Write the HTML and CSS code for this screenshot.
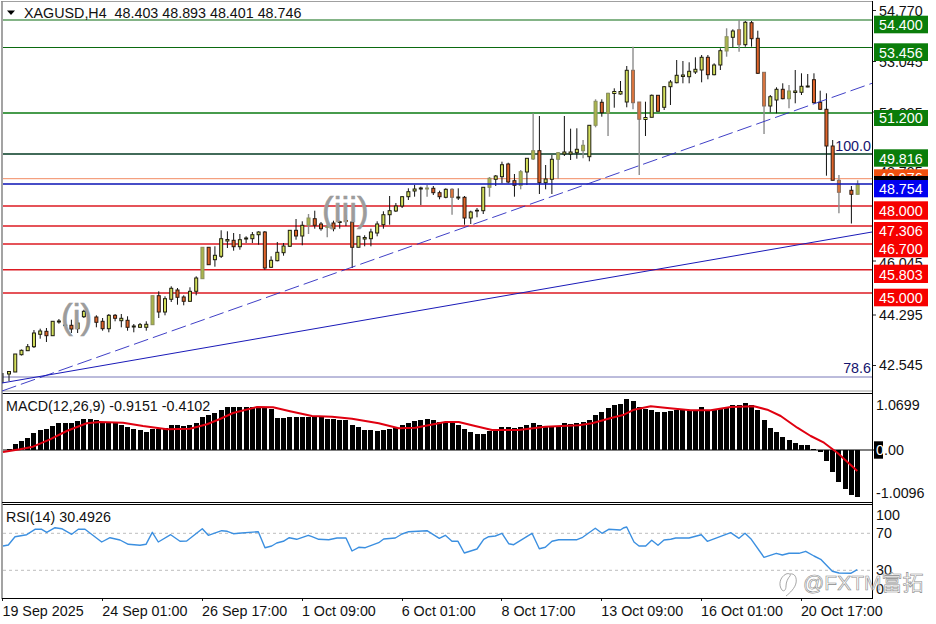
FILE: index.html
```html
<!DOCTYPE html>
<html lang="en">
<head>
<meta charset="utf-8">
<title>XAGUSD,H4</title>
<link rel="stylesheet" href="styles.css">
</head>
<body>
<main class="terminal">
  <svg class="pane" width="936" height="392" viewBox="0 0 936 392">
    <line class="frame-gray" x1="1" y1="1.5" x2="873" y2="1.5"/>
    <line class="frame-gray thick" x1="2" y1="1" x2="2" y2="392"/>
    <line class="frame-gray" x1="2" y1="391" x2="873" y2="391"/>
    <line class="frame" x1="872.5" y1="1" x2="872.5" y2="392"/>

    <line class="lv green" x1="3" y1="20" x2="872" y2="20"/>
    <line class="lv green" x1="3" y1="47.5" x2="872" y2="47.5"/>
    <line class="lv green heavy" x1="3" y1="113" x2="872" y2="113"/>
    <line class="lv dark" x1="3" y1="154" x2="872" y2="154"/>
    <line class="lv coral" x1="3" y1="178.7" x2="872" y2="178.7"/>
    <line class="lv red heavy" x1="3" y1="206" x2="872" y2="206"/>
    <line class="lv red" x1="3" y1="226" x2="872" y2="226"/>
    <line class="lv red" x1="3" y1="244" x2="872" y2="244"/>
    <line class="lv red" x1="3" y1="269.7" x2="872" y2="269.7"/>
    <line class="lv red" x1="3" y1="293" x2="872" y2="293"/>
    <line class="lv fib" x1="3" y1="377" x2="872" y2="377"/>

    <g id="candles"></g>

    <line class="lv blue heavy" x1="3" y1="184" x2="872" y2="184"/>
    <line class="trend dashed" x1="2" y1="391" x2="872" y2="83.3"/>
    <line class="trend" x1="2" y1="383" x2="872" y2="232"/>

    <text class="wave" x="61" y="329">(i)</text>
    <text class="wave" x="322" y="222">(iii)</text>

    <path class="marker" d="M7 10.5h8l-4 4.5z"/>
    <text class="t" x="24" y="18">XAGUSD,H4&#160; 48.403 48.893 48.401 48.746</text>
    <text class="t fibt" x="871" y="151" text-anchor="end">100.0</text>
    <text class="t fibt" x="871" y="373" text-anchor="end">78.6</text>

    <path class="tick" d="M873 10.5h3M873 61.5h3M873 112h3M873 261h3M873 315h3M873 365.5h3"/>
    <text class="t" x="879" y="15.500">54.770</text>
    <text class="t" x="879" y="66.500">53.045</text>
    <text class="t" x="879" y="118">51.295</text>
    <text class="t" x="879" y="176.500">48.795</text>
    <text class="t" x="879" y="268">46.045</text>
    <text class="t" x="879" y="319.700">44.295</text>
    <text class="t" x="879" y="370.300">42.545</text>

    <rect class="tag g" x="874" y="15.700" width="54" height="17.600"/>
    <text class="t w" x="879" y="30">54.400</text>
    <rect class="tag g" x="874" y="43.300" width="54" height="17.700"/>
    <text class="t w" x="879" y="57.700">53.456</text>
    <rect class="tag g" x="874" y="110" width="54" height="16"/>
    <text class="t w" x="879" y="122.700">51.200</text>
    <rect class="tag g" x="874" y="149.300" width="54" height="17.400"/>
    <text class="t w" x="879" y="164">49.816</text>
    <rect class="tag o" x="874" y="169.300" width="54" height="8"/>
    <text class="t w" x="879" y="183">48.976</text>
    <rect class="tag k" x="874" y="176" width="54" height="5"/>
    <rect class="tag b" x="874" y="180" width="54" height="17.300"/>
    <text class="t w" x="879" y="194">48.754</text>
    <rect class="tag r" x="874" y="201.300" width="54" height="18.400"/>
    <text class="t w" x="879" y="215.700">48.000</text>
    <rect class="tag r" x="874" y="222" width="54" height="35.300"/>
    <text class="t w" x="879" y="235.700">47.306</text>
    <text class="t w" x="879" y="254">46.700</text>
    <rect class="tag r" x="874" y="264.700" width="54" height="18.300"/>
    <text class="t w" x="879" y="279.700">45.803</text>
    <rect class="tag r" x="874" y="288.700" width="54" height="17.600"/>
    <text class="t w" x="879" y="303">45.000</text>
  </svg>

  <svg class="pane" width="936" height="111" viewBox="0 392 936 111">
    <line class="frame" x1="2" y1="393.500" x2="873" y2="393.500"/>
    <line class="frame-gray thick" x1="2" y1="392" x2="2" y2="503"/>
    <line class="frame" x1="872.5" y1="392" x2="872.5" y2="503"/>
    <line class="frame" x1="2" y1="502.500" x2="873" y2="502.500"/>
    <g id="histogram"></g>
    <line class="frame" x1="3" y1="450" x2="874" y2="450"/>
    <polyline id="signal" class="signal"/>
    <text class="t" x="6" y="411">MACD(12,26,9) -0.9151 -0.4102</text>
    <text class="t" x="876" y="409.700">1.0699</text>
    <rect class="tag k" x="874" y="441.300" width="9" height="17.400"/>
    <text class="t" x="876" y="455"><tspan class="zero">0</tspan>.00</text>
    <text class="t" x="876" y="498.300">-1.0096</text>
  </svg>

  <svg class="pane" width="936" height="99" viewBox="0 503 936 99">
    <line class="frame" x1="2" y1="504.500" x2="873" y2="504.500"/>
    <line class="frame-gray thick" x1="2" y1="503" x2="2" y2="599"/>
    <line class="frame" x1="872.5" y1="503" x2="872.5" y2="599"/>
    <line class="frame" x1="2" y1="598.500" x2="873" y2="598.500"/>
    <line class="level" x1="3" y1="533.300" x2="872" y2="533.300"/>
    <line class="level" x1="3" y1="570.300" x2="872" y2="570.300"/>
    <polyline id="rsi" class="rsi"/>
    <path class="tick" d="M2.500 599v2M102.500 599v2M202.500 599v2M302.500 599v2M402.500 599v2M501.500 599v2M601.500 599v2M701.500 599v2M801.500 599v2"/>
    <text class="t" x="6" y="521.700">RSI(14) 30.4926</text>
    <text class="t" x="876" y="520">100</text>
    <text class="t" x="876" y="538.300">70</text>
    <text class="t" x="876" y="575.300">30</text>
    <text class="t" x="876" y="594.300">0</text>
    <path class="mark" d="M786 574C780 577 778 585 782 590C784 592 786 590 786 586C786 582 788 578 790 576C791 574 789 573 786 574ZM790 574C795 573 797 578 796 583C795 588 790 593 786 596"/>
    <text class="watermark" x="803" y="590">@FXTM富拓</text>
  </svg>

  <div class="timeaxis">
    <span>19 Sep 2025</span>
    <span>24 Sep 01:00</span>
    <span>26 Sep 17:00</span>
    <span>1 Oct 09:00</span>
    <span>6 Oct 01:00</span>
    <span>8 Oct 17:00</span>
    <span>13 Oct 09:00</span>
    <span>16 Oct 01:00</span>
    <span>20 Oct 17:00</span>
  </div>
</main>
<script src="script.js"></script>
</body>
</html>
```
FILE: styles.css
```css
* { box-sizing: border-box; }
html, body { margin: 0; padding: 0; background: #fff; }
body { width: 936px; height: 624px; overflow: hidden; font-family: "Liberation Sans", Arial, sans-serif; }
.terminal { display: flex; flex-direction: column; width: 936px; height: 624px; }
.pane { display: block; flex: none; }

.frame { stroke: #000; stroke-width: 1; }
.frame-gray { stroke: #a0a0a0; stroke-width: 1; }
.frame-gray.thick { stroke: #8c8c8c; stroke-width: 1.6; }
.tick { fill: none; stroke: #222; stroke-width: 1; }

.lv { stroke-width: 1; }
.lv.heavy { stroke-width: 1.6; }
.lv.green { stroke: #0b6a10; stroke-width: 1.2; }
.lv.green.heavy { stroke: #0a7a10; stroke-width: 1.7; }
.lv.dark { stroke: #033a22; stroke-width: 1.3; }
.lv.coral { stroke: #f28a62; }
.lv.blue { stroke: #0a12b4; }
.lv.red { stroke: #dc1a22; stroke-width: 1.4; }
.lv.fib { stroke: #7878b8; }
.trend { stroke: #1a1ab8; stroke-width: 1; }
.trend.dashed { stroke: #2a2ac0; stroke-width: .9; stroke-dasharray: 15 5; }

.body-up { fill: #d4e05c; stroke: #1e1e10; stroke-width: 1; }
.body-down { fill: #e0642a; stroke: #2a1a10; stroke-width: 1; }
.body-up.soft { fill: #aab54a; stroke: #8a8f60; }
.body-down.soft { fill: #d8743e; stroke: #8a7060; }
.wick { stroke: #111; stroke-width: 1; }
.wick.soft { stroke: #8c8c8c; stroke-width: 1.4; }

.wave { font: 35px "Liberation Sans", Arial, sans-serif; fill: #9c9c9c; stroke: #9c9c9c; stroke-width: .6; }
.marker { fill: #000; }
.t { font: 14.3px "Liberation Sans", Arial, sans-serif; fill: #111; }
.t.w { fill: #fff; }
.t.fibt { fill: #14146e; }
.zero { fill: #fff; }
.tag.g { fill: #0a7d0a; }
.tag.o { fill: #f0500f; }
.tag.k { fill: #000; }
.tag.b { fill: #0000f0; }
.tag.r { fill: #f60000; }

.bar { fill: #000; shape-rendering: crispEdges; }
.signal { fill: none; stroke: #e00010; stroke-width: 2; stroke-linejoin: round; }
.level { stroke: #bdbdbd; stroke-width: 1; stroke-dasharray: 3 3; }
.rsi { fill: none; stroke: #3b8fe0; stroke-width: 1.4; stroke-linejoin: round; }

.watermark {
  font: 21px "Liberation Sans", "Noto Sans CJK SC", sans-serif;
  fill: rgba(255, 255, 255, .55);
  stroke: #8a8a8a;
  stroke-width: .6;
}
.mark { fill: rgba(255, 255, 255, .5); stroke: #8f8f8f; stroke-width: .8; }

.timeaxis {
  display: grid;
  grid-template-columns: repeat(9, 99.8px);
  padding: 1px 0 0 2.5px;
  font-size: 14.3px;
  line-height: 16px;
  color: #111;
}
.timeaxis span { white-space: nowrap; }
```
FILE: script.js
```js
var NS = 'http://www.w3.org/2000/svg';
var STEP = 6.24, X0 = 9;
function xOf(i) { return X0 + STEP * i; }
function add(parent, name, attrs) {
  var el = document.createElementNS(NS, name);
  for (var k in attrs) el.setAttribute(k, attrs[k]);
  parent.appendChild(el);
  return el;
}

// index, wick top, body top, body bottom, wick bottom, direction (1 up, 0 down), soft
var C = [
[0,371,371.5,374,381,1],[1,354,354,372,372,1],[2,349.5,350.3,354.7,355.5,1],[3,344,346.7,350.7,351,1],
[4,330,333,346.7,348,1],[5,328.7,331,334.3,338.7,1],[6,328,331.3,335.7,342,0],[7,321.3,321.3,335.7,335.7,1],
[8,319,321,322,323.7,1],[9,321,325,325.6,326,1],[10,319.7,325.3,329,333,0],[11,320,323,328.7,333,1],
[12,309.7,311.3,316.7,318,1],[14,315.3,317,322.3,327.3,0],[15,318,321.3,328.7,330.7,0],[16,314,315.3,328.7,332.3,1],
[17,314,315.3,318.3,321.3,0],[18,314,318.3,320.7,327.3,1],[19,316.3,320.3,327.3,330.7,0],[20,324,326,327,332.3,1],
[21,323,324.7,327.3,328,1],[22,321.3,324.3,327.3,330.7,1],[23,295.7,295.7,324.7,324.7,1,1],[24,291.3,295.7,312,318,0],
[25,296.3,298.7,312,315.3,1],[26,286.3,288.3,299.3,302,1],[27,288,290,297.3,304.7,0],[28,295.3,297,301.3,305.3,0],
[29,287.3,291.3,301.3,302,1],[30,276.3,278,291.3,295.3,1],[31,247.3,247.3,278.7,278.7,1,1],[32,247.3,247.3,264.7,264.7,0],
[33,246.3,255.3,259.7,266.7,1],[34,230.3,238.7,256.3,258,1],[35,231.3,239.5,241,248,1],[36,233,240.3,246.7,250.7,0],
[37,234,239.7,246.7,249.7,1],[38,236.3,238,239,243,1],[39,232,234.7,238.7,243,1],[40,231.3,232,234.7,244.7,1],
[41,231,232,268,269.7,0],[42,256.3,260.3,267.3,268,1],[43,242,252.3,260.7,261.3,1],[44,243,246,252.7,255.7,1],
[45,230,230.3,246.3,247,1],[46,219,230.3,236,239.7,0],[47,221.3,225.3,236,245.3,1],[48,214,218,225.3,234,1,1],
[49,210.7,218.7,225.3,228.7,0],[50,222,224,228.7,230.7,0],[51,218,226.7,227.3,237.3,1,1],[52,220.7,223,228.7,231.3,0],
[53,220.7,221.7,222.5,228.7,1],[54,215,220.5,221.3,226,1],[55,221.3,222,247.3,268,0],[56,236.3,236.3,247.3,247.3,1],
[57,235.3,237.5,239,246.3,1],[58,228.7,232,238.7,246.3,1],[59,221.3,224,233,236.3,1],[60,211.3,214.7,224.7,228.7,1],
[61,196,210.7,214.7,224.7,1],[62,203,206,211,212,1],[63,196,196.7,206,208,1],[64,188.3,191.7,196.7,200,1],
[65,185,189,191,196.7,1],[66,186.7,188,189,205,1],[67,185,188,189,196.7,1,1],[68,186,188.3,192.7,195,0],
[69,190.7,192.7,196.7,199.3,0],[70,188.3,189.3,197.3,198.3,1],[71,188.3,189.3,197.3,214.7,0,1],[72,188.3,197,198,200,1],
[73,196,197.3,218,224.7,0],[74,210.7,212,218,224,1],[75,208,210.3,211,217.3,1],[76,187.3,187.3,210.7,214,1],
[77,177,178.3,187.3,196.7,1,1],[78,175,176,179.3,186,1],[79,161.7,164.7,176.7,183.3,1],[80,162.7,164,182,183.3,0],
[81,174,180.7,185.3,196.7,0],[82,170,171.7,185.3,189.3,1,1],[83,158.3,158.3,172,185,1],[84,113.3,150.7,159,160,1,1],
[85,116,150.7,182.7,194,0],[86,165,179,182.7,189.3,1],[87,155,159.3,179.3,194,1],[88,152,152.7,159.3,178.7,1,1],
[89,116,152,154,156,1],[90,128.7,152,154,160,1],[91,128.3,149.3,152.7,158.7,1],[92,140,145.3,150.7,158.3,1,1],
[93,125.3,125.3,156.7,161.3,1],[94,99.3,101.3,125.3,127.3,1,1],[95,99.3,102.3,112.7,116.7,0],[96,92.7,93.3,113.3,136,1,1],
[97,88.3,91.5,93.5,107.7,1],[98,81,91.5,94,94.7,1],[99,66,70.3,102,107.3,1],[100,46.7,70.3,102.7,109.3,0,1],
[101,102,102,119.3,175,0,1],[102,101.7,117.5,119.5,136,1],[103,94.5,95.3,117.3,117.3,1],[104,95.3,95.3,111.3,111.3,0],
[105,86,86.7,107.3,110,1],[106,80,82,86.7,105,1],[107,60,75.3,82.7,83.3,1],[108,61,75,76.5,83.3,1],
[109,62.3,71.3,76.7,83.3,1],[110,57.3,69.3,72,74,1],[111,55,57.3,70,82.3,1],[112,55,57.3,74.7,79.3,0],
[113,63.300,65,74.7,75.3,1],[114,48.3,50.7,65,70,1],[115,28.3,36.7,51,56.7,1,1],[116,29.3,31,37.3,47.3,1],
[117,20,29.7,44.7,51.7,0,1],[118,21,22.3,44.7,46.7,1],[119,21,22.7,38.7,46.7,0],[120,30.7,38.3,73.3,74,0],
[121,72.3,72.3,106,134,0,1],[122,95,96.7,106,112.3,1],[123,87.3,89.3,100,113.3,1],[124,83.3,89.3,98.7,99.3,0],
[125,85,91,98.7,108.3,1,1],[126,70,91,92.5,103.3,1],[127,73.3,86.3,92.3,95,1],[128,74,86,87,87.3,1],
[129,73.3,79.7,102.7,103.3,0],[130,90.7,102.3,109.3,110,0],[131,93.3,109.3,146,175.7,0],[132,140,146,180.3,180.3,0],
[133,175,180.3,192.3,213.3,0,1],[135,186,190.3,194.3,223.5,0],[136,180.3,184.3,194.3,194.3,1,1]
];

var cg = document.getElementById('candles');
add(cg, 'line', { 'class': 'wick', x1: 3, x2: 3, y1: 373, y2: 383 });
C.forEach(function (c) {
  var x = xOf(c[0]), soft = c[6] ? ' soft' : '';
  add(cg, 'line', { 'class': 'wick' + soft, x1: x, x2: x, y1: c[1], y2: c[4] });
  add(cg, 'rect', {
    'class': (c[5] ? 'body-up' : 'body-down') + soft,
    x: x - 1.5, y: c[2], width: 3, height: Math.max(c[3] - c[2], 0.6)
  });
});

// MACD histogram: height above the zero line at y = 450
var H = [1.3,5.7,9,12,16.7,20,21.3,24,26.7,27.3,27.3,29,30.7,30.7,29.7,28.3,27.3,26.7,25.3,23.3,21.3,19.7,18.3,21.3,21.3,22,25,24.7,24,24.7,26.7,33,
35.3,37,40.3,42.7,42.7,43,43,43.5,43.5,43,41,32,32,32.7,32.7,32.7,33,33.3,32.7,31,30.7,30.3,30,25,22.7,20.3,19.7,19,20.3,21.3,22.3,24.7,26.7,29,
29.7,30.7,29.7,28,28.3,28,25,21.3,18.3,15.7,16.3,19.3,21.3,23.3,22.7,22,23,25,27.3,25,23.3,23.3,23,26.7,26.3,26.7,27.7,30,35.3,38,42,44.7,46,
50.7,48.7,43,41,40.3,38,38,39.3,39.7,40.3,40.3,40.3,43,40.3,40.3,40.7,43,45.3,44.7,46.7,45.3,40,30,22.3,18.3,13.3,10,6.7,5.3,4.7,1.3,-2,-11,-22,-31.7,-38.7,-45,-47.3];
var hg = document.getElementById('histogram');
H.forEach(function (h, i) {
  add(hg, 'rect', {
    'class': 'bar',
    x: Math.round(xOf(i) - 2.5), y: h > 0 ? 450 - h : 450, width: 5, height: Math.abs(h)
  });
});

document.getElementById('signal').setAttribute('points',
  '3,452 20,449.3 33,446.7 50,439.3 66.7,431 86.7,423.3 100,422 123,422.7 143,426 167,429.3 190,428.7 207,424.3 220,419 233,413 257,407 273,407.3 290,411.3 312,416 332,416.7 352,418.7 378.7,423.3 398.7,428.3 415.3,427.7 445.3,422 458.7,422 472,425.3 492,430 518.7,430 545.3,426.7 578.7,425.3 592,423.3 612,417.7 624,414.7 634,409.7 650.7,406.3 667.3,408 690.7,410.3 710.7,410.3 730.7,407 754,406.3 767.3,409.7 780.7,416 797.3,427.7 810.7,436 824,442.7 837.3,452.7 857.3,471');

// RSI traced in three strips, each with its own horizontal origin
function strip(ox, list) {
  var out = [];
  for (var i = 0; i < list.length; i += 2) out.push((ox + list[i] / 3).toFixed(1) + ',' + (416 + list[i + 1] / 3).toFixed(1));
  return out;
}
var rsi = strip(0, [9,390,25,387,45,362,80,356,105,340,125,340,140,349,165,335,185,338,215,355,235,340,255,340,305,378,330,365,360,372,385,385,420,388,438,385,457,349,475,378,512,356,540,376,560,375,607,338,625,358,665,344,682,346,700,353,725,351,775,347,795,395,815,390,830,381,850,376,868,365,890,370,925,358])
  .concat(strip(312, [0,362,20,370,50,371,75,366,102,366,120,405,140,394,160,395,200,380,215,369,250,366,270,354,290,347,345,344,382,367,400,358,420,376,438,376,457,411,495,399,515,370,530,362,550,360,570,352,590,383,605,386,660,352,682,398,700,394,720,376,740,371,795,371,812,364,850,337,870,352,890,340,925,342]))
  .concat(strip(624, [0,335,8,333,30,378,45,390,65,390,83,373,102,388,120,372,140,370,155,366,195,366,232,356,250,376,320,350,345,367,363,352,382,370,420,424,457,412,475,417,495,412,525,412,545,406,570,420,590,430,625,466,645,471,680,472,700,461]));
document.getElementById('rsi').setAttribute('points', rsi.join(' '));
```
